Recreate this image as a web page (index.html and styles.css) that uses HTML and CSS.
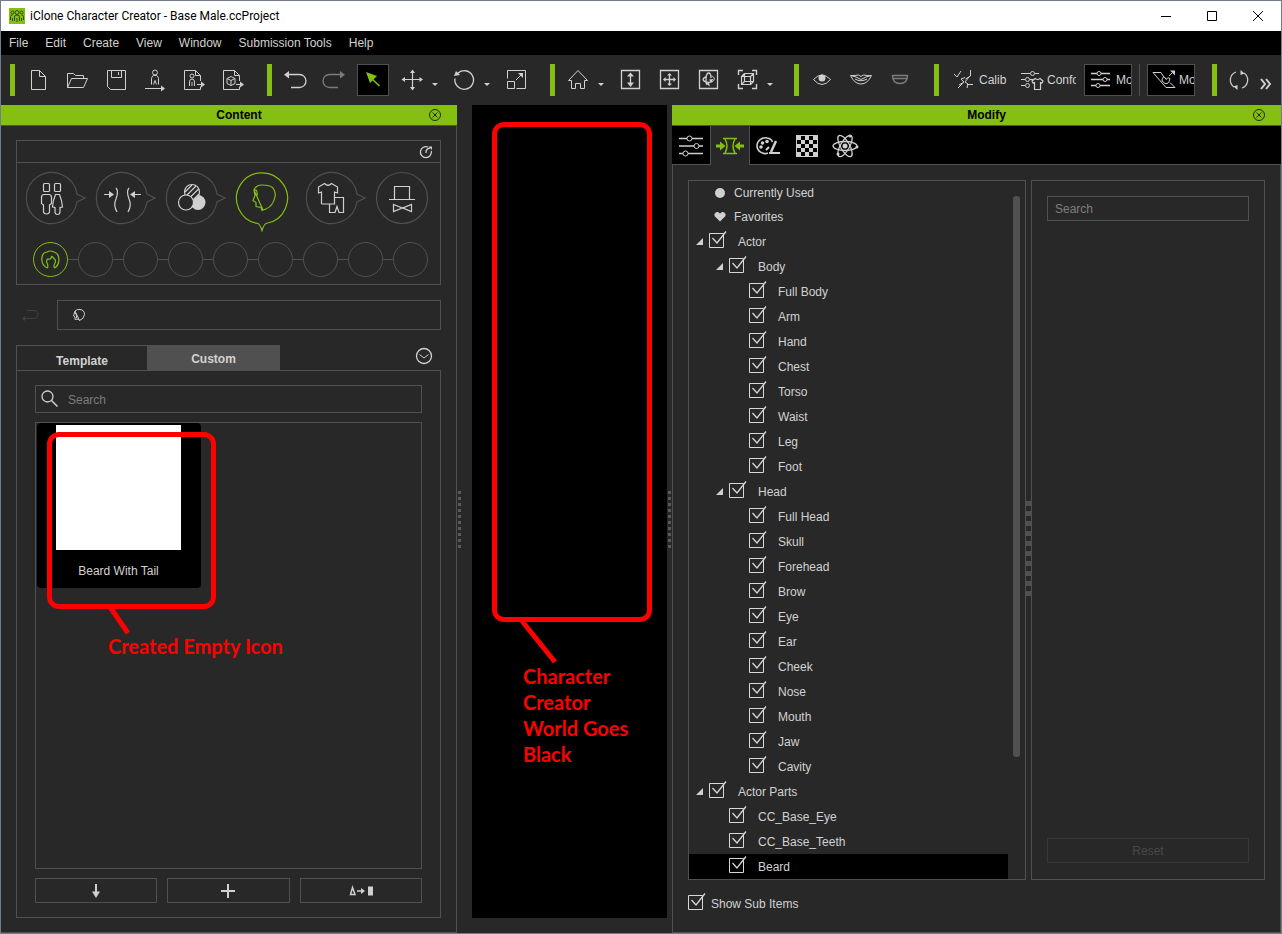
FILE: index.html
```html
<!DOCTYPE html>
<html lang="en">
<head>
    <meta charset="UTF-8">
    <meta name="viewport" content="width=device-width, initial-scale=1.0">
    <title>iClone Character Creator - Base Male.ccProject</title>
    <link rel="stylesheet" href="styles.css">
</head>
<body>
    <div class="window">
        <header class="titlebar">
            <svg class="app-icon" width="16" height="16" viewBox="0 0 16 16">
                <rect width="16" height="16" fill="#84bf12"/>
                <g fill="none" stroke="#2f4a08">
                    <circle cx="8" cy="4.5" r="2"/><circle cx="3.5" cy="4.5" r="1.5"/><circle cx="12.5" cy="4.5" r="1.5"/>
                    <path d="M5.500 13V9q0-2 2.500-2t2.500 2v4M8 10v4M1.500 12V8.500q0-1.500 2-1.500M14.500 12V8.500q0-1.500-2-1.500M3.500 10v3M12.500 10v3"/>
                </g>
            </svg>
            <span class="title">iClone Character Creator - Base Male.ccProject</span>
            <button type="button" class="win-btn" aria-label="Minimize"><svg width="12" height="12" viewBox="0 0 12 12"><path d="M1 6.500h10"/></svg></button>
            <button type="button" class="win-btn" aria-label="Maximize"><svg width="12" height="12" viewBox="0 0 12 12"><path d="M1.500 1.500h9v9h-9z"/></svg></button>
            <button type="button" class="win-btn" aria-label="Close"><svg width="12" height="12" viewBox="0 0 12 12"><path d="M1 1l10 10M11 1L1 11"/></svg></button>
        </header>

        <nav class="menubar">
            <button type="button">File</button>
            <button type="button">Edit</button>
            <button type="button">Create</button>
            <button type="button">View</button>
            <button type="button">Window</button>
            <button type="button">Submission Tools</button>
            <button type="button">Help</button>
        </nav>

        <div class="toolbar">
            <div class="group">
                <button type="button" class="tool" aria-label="New"><svg class="icon" viewBox="0 0 22 22"><path d="M4.500 1.500h8l6 6v13h-14zM12.500 1.500v6h6"/></svg></button>
                <button type="button" class="tool" aria-label="Open"><svg class="icon" viewBox="0 0 22 22"><path d="M1.500 18.500v-14h6l2 2h8v3M1.500 18.500l4-9h16l-4 9z"/></svg></button>
                <button type="button" class="tool" aria-label="Save"><svg class="icon" viewBox="0 0 22 22"><path d="M2.500 1.500h18v19h-15l-3-3zM6.500 1.500v7h10v-7M13.500 3v3"/></svg></button>
                <button type="button" class="tool" aria-label="Export avatar"><svg class="icon" viewBox="0 0 22 22"><circle cx="11" cy="3.500" r="2.500"/><path d="M7.500 15.500v-6q0-2 2-3h3q2 1 2 3v6M9.500 15.500l1.500-4 1.500 4M1 19.500h18"/><path class="solid" d="M17 16.500l4 3-4 3z"/></svg></button>
                <button type="button" class="tool" aria-label="Export avatar file"><svg class="icon" viewBox="0 0 22 22"><path d="M17.500 12V6.500l-5-5h-11v19h16v-3M12.500 1.500v5h5"/><circle cx="9" cy="7" r="2"/><path d="M6.500 17v-4q0-3 2.500-3t2.500 3v4M9 13v4M14 15.500h5"/><path class="solid" d="M18 12.500l4 3-4 3z"/></svg></button>
                <button type="button" class="tool" aria-label="Export object"><svg class="icon" viewBox="0 0 22 22"><path d="M17.500 12V6.500l-5-5h-11v19h16v-3M12.500 1.500v5h5M9 7.500l4 2v5l-4 2-4-2v-5zM5 9.500l4 2 4-2M9 11.500v5M14 15.500h5"/><path class="solid" d="M18 12.500l4 3-4 3z"/></svg></button>
            </div>
            <div class="group">
                <button type="button" class="tool" aria-label="Undo"><svg class="icon" viewBox="0 0 22 22"><path d="M3 5.500h12.500a6.500 6.500 0 0 1 0 13H7" stroke-width="1.300"/><path class="solid" d="M5 2v7.500L0 5.700z"/></svg></button>
                <button type="button" class="tool dim" aria-label="Redo"><svg class="icon" viewBox="0 0 22 22"><path d="M19 5.500H6.500a6.500 6.500 0 0 0 0 13H15" stroke-width="1.300"/><path class="solid" d="M17 2v7.500l5-3.800z"/></svg></button>
                <button type="button" class="tool" aria-label="Select"><span class="pressed"><svg class="icon green" viewBox="0 0 22 22"><path class="solid" d="M4 3l11 4-7 7z"/><path d="M9 9l8.500 8" stroke-width="1.600"/></svg></span></button>
                <button type="button" class="tool" aria-label="Move"><svg class="icon" viewBox="0 0 22 22"><path d="M11.500 2v18M2 10.500h18" stroke-width="1.200"/><path class="solid" d="M9 4L11.500.5 14 4zM9 18l2.500 3.500L14 18zM4 8L.5 10.500 4 13zM18.500 8l3.500 2.500-3.500 2.500z"/></svg></button>
                <button type="button" class="caret" aria-label="Move options"></button>
                <button type="button" class="tool" aria-label="Rotate"><svg class="icon" viewBox="0 0 22 22"><path d="M4.500 4.500a9.300 9.300 0 1 1-2.500 5" stroke-width="1.300"/><path class="solid" d="M1 7l2-5 4 4z"/></svg></button>
                <button type="button" class="caret" aria-label="Rotate options"></button>
                <button type="button" class="tool" aria-label="Scale"><svg class="icon" viewBox="0 0 22 22"><path d="M2.500 9.500v-8h18v18h-9M2.500 12.500h7v7h-7zM11 11l6-6"/><path class="solid" d="M13 4h5v5z"/></svg></button>
            </div>
            <div class="group">
                <button type="button" class="tool" aria-label="Home"><svg class="icon" viewBox="0 0 22 22"><path d="M11 1.500L1.500 11.500h3v8h4v-5h5v5h4v-8h3z"/></svg></button>
                <button type="button" class="caret" aria-label="Home options"></button>
                <button type="button" class="tool" aria-label="Zoom"><svg class="icon" viewBox="0 0 22 22"><path d="M2.500 1.500h18v18h-18zM11.500 6v9" stroke-width="1.300"/><path class="solid" d="M8 7.500L11.500 3.500 15 7.500zM8 13.500l3.500 4.500 3.500-4.500z"/></svg></button>
                <button type="button" class="tool" aria-label="Pan"><svg class="icon" viewBox="0 0 22 22"><path d="M2.500 1.500h18v18h-18zM11.500 6v9M7 10.500h9" stroke-width="1.300"/><path class="solid" d="M9 6.500l2.500-2.500L14 6.500zM9 14.500l2.500 2.500 2.500-2.500zM7.500 8L5 10.500 7.500 13zM15.500 8l2.500 2.500-2.500 2.500z"/></svg></button>
                <button type="button" class="tool" aria-label="Orbit"><svg class="icon" viewBox="0 0 22 22"><path d="M2.500 1.500h18v18h-18zM10 16c-2-3-1-12 1.500-12 2 0 2.500 3 2.500 5M15.500 12.500c-5 2-9.500 0-9.500-2.500M6 10q1-2 4-2" stroke-width="1.300"/><path d="M14.500 7c4 1 3.500 5 0 6"/><path class="solid" d="M8 14h4l1 3.500zM12 10.500l4.500-.5-2.500 3.500z"/></svg></button>
                <button type="button" class="tool" aria-label="Frame object"><svg class="icon" viewBox="0 0 22 22"><path d="M2.500 6V1.500H7M16 1.500h4.500V6M20.500 15v4.500H16M7 19.500H2.500V15" stroke-width="1.400"/><path d="M5.500 7.500h9v8h-9zM8.500 4.500h9v8h-9zM5.500 7.500l3-3M14.500 7.500l3-3M14.500 15.500l3-3M5.500 15.500l3-3" stroke-width="1.200"/></svg></button>
                <button type="button" class="caret" aria-label="Frame options"></button>
            </div>
            <div class="group">
                <button type="button" class="tool" aria-label="Eye"><svg class="icon" viewBox="0 0 22 22"><path d="M2.500 10.500q8.500-9 17 0-8.500 10-17 0z"/><circle class="solid" cx="11" cy="9" r="3.500"/></svg></button>
                <button type="button" class="tool" aria-label="Mouth"><svg class="icon" viewBox="0 0 22 22"><path d="M.5 6.500q3 .5 8-.5l2.500 1.500L13.500 6q5 1 8 .5-4 8.500-10.500 8.500T.5 6.500zM1 6.500q5 1 10 4 5-3 10-4M5 10q6 3.500 12 0"/></svg></button>
                <button type="button" class="tool dim" aria-label="Teeth"><svg class="icon" viewBox="0 0 22 22"><path d="M3.500 6.500h15q0 8-7.500 8t-7.500-8zM4 9.500h14" stroke-width="1.400"/></svg></button>
            </div>
            <div class="group last">
                <button type="button" class="text-tool"><svg class="icon" viewBox="0 0 22 22"><path d="M1 5l3 3 4-6M17.500 1v6l-5 3M12 8.500l-4 1.500 3 3-5 3M16 8l-4 5 3 2-1 4M5 19l5-5M14 15.500h6"/></svg>Calib</button>
                <button type="button" class="text-tool"><svg class="icon" viewBox="0 0 22 22"><path d="M0 4.500h9M14 4.500h4M0 10.500h4M9 10.500h3M0 16.500h4M13.500 20.500v-7l-1.500.5-1-2 3-2.500q2.500 2 5 0l3 2.500-1 2-1.500-.5v7z" stroke-width="1.200"/><circle cx="11.500" cy="4.500" r="2"/><circle cx="6.500" cy="10.500" r="2"/><circle cx="6.500" cy="16.500" r="2"/></svg>Confo</button>
                <button type="button" class="text-tool framed"><svg class="icon" viewBox="0 0 22 22"><path d="M1 4.500h6M11 4.500h9M1 10.500h12M17 10.500h3M1 16.500h5M10 16.500h10" stroke-width="1.400"/><circle cx="9" cy="4.500" r="2"/><circle cx="15" cy="10.500" r="2"/><circle cx="8" cy="16.500" r="2"/></svg>Mod</button>
                <span class="divider"></span>
                <button type="button" class="text-tool framed"><svg class="icon" viewBox="0 0 22 22"><path d="M0 3.500h8l3 5M0 3.500l13 15h9l-5-5M9 12q0-5 3-3.500l1 2q2-3 4-1l-1 3q-1 3-4 2zM16 7l3-3"/><path class="solid" d="M17 1.500h5v5z"/></svg>Mod</button>
            </div>
            <div class="group">
                <button type="button" class="tool" aria-label="Refresh"><svg class="icon" viewBox="0 0 22 22"><path d="M8 3a8.500 8.500 0 0 0-2 15M14 19a8.500 8.500 0 0 0 2-15" stroke-width="1.200"/><path class="solid" d="M12.500 1v5l4-1.500zM9.500 21v-5l-4 1.500z"/></svg></button>
                <button type="button" class="more" aria-label="More tools"><svg width="12" height="12" viewBox="0 0 12 12"><path d="M1 1l4 5-4 5M6 1l4 5-4 5"/></svg></button>
            </div>
        </div>

        <main class="workspace">
            <section class="panel content-panel">
                <h2 class="panel-title">Content
                    <button type="button" class="panel-close" aria-label="Close content"><svg width="14" height="14" viewBox="0 0 14 14"><circle cx="7" cy="7" r="5.500"/><path d="M4.500 4.500l5 5M9.500 4.500l-5 5"/></svg></button>
                </h2>
                <div class="panel-body">
                    <div class="category-box">
                        <div class="category-head">
                            <button type="button" aria-label="Reset category"><svg class="icon small" viewBox="0 0 14 14"><path d="M9 2a5.500 5.500 0 1 0 3.300 4M7 8q-.5-4 4-5" stroke-width="1.300"/><path class="solid" d="M9.500 1.500H13V5z"/></svg></button>
                        </div>
                        <div class="steps">
                            <button type="button" class="step" aria-label="Actor"><svg viewBox="0 0 52 52"><path class="ring" d="M51 22a25.500 25.500 0 1 0 0 8l8-4z"/><rect x="17.500" y="11.500" width="6" height="8" rx="1"/><rect x="28.500" y="11.500" width="6" height="8" rx="1"/><path d="M18 22.500h5q2.500 0 2.500 3v6l-2 1.500v7q-.5 2-3 2t-3-2v-7l-2-1.500v-6q0-3 2.500-3zM29.500 22.500h4q2.500 6 3 12.500l-2.500.5v5q-.5 2-2.500 2t-2.500-2v-5l-2.500-.5q.5-7 3-12.500z"/></svg></button>
                            <button type="button" class="step" aria-label="Morph"><svg viewBox="0 0 52 52"><path class="ring" d="M51 22a25.500 25.500 0 1 0 0 8l8-4z"/><path d="M20 16q3 3 0 11-3 6 1 13M33 16q-3 3 0 11 3 6-1 13M8 22.500h7M37 22.500h8"/><path class="solid" d="M13 19l5 3.500-5 3.500zM39 19l-5 3.500 5 3.500z"/></svg></button>
                            <button type="button" class="step" aria-label="Skin"><svg viewBox="0 0 52 52"><path class="ring" d="M51 22a25.500 25.500 0 1 0 0 8l8-4z"/><circle class="solid" cx="32" cy="30.500" r="7.500"/><circle class="disc" cx="26" cy="20" r="7.500"/><path d="M19 20l7-7M20 24l10-10M23 26.500l9.500-9.500M28 27l5-5"/><circle class="disc" cx="20" cy="30.500" r="7.500"/></svg></button>
                            <button type="button" class="step active" aria-label="Hair"><svg viewBox="0 0 52 52"><path class="ring" d="M30 51.500a25.500 25.500 0 1 0-8 0q2 1 4 7 2-6 4-7z"/><path d="M18 18q2-5 8-5 8 0 11 3 3 4 2 9-2 9-9 12l-4 1.500-1-3-5-1v-4l-3-2 2-5-1-5zM18 18l9 20M18 18q4-1 3 6"/></svg></button>
                            <button type="button" class="step" aria-label="Cloth"><svg viewBox="0 0 52 52"><path class="ring" d="M51 22a25.500 25.500 0 1 0 0 8l8-4z"/><path d="M15.500 32V20l-3 1v-6l6-3.500q3.500 3.500 7 0l6 3.500v6l-3-1v5M15.500 32h13v-6.500h9v15h-4.500l-2-6-2 6h-5.500V32"/></svg></button>
                            <button type="button" class="step" aria-label="Accessory"><svg viewBox="0 0 52 52"><circle class="ring" cx="26" cy="26" r="25.500"/><path d="M18.500 14.500h15v13h-15zM13 27.500h26M17.500 32.500l9 3.500 9-3.500v7L26.500 36l-9 3.500z"/></svg></button>
                        </div>
                        <div class="slots">
                            <button type="button" class="slot active" aria-label="Hair style"><svg viewBox="0 0 35 35"><path d="M14.500 26C7 23 7 11 14 10q3-2 7 0c7 2 6 13 .5 16M14.500 26q1-3-1-6 0-2 1-3 4 1 4-3M21.500 26q-1-2 0-4 2-3 0-5-2-2-3-3"/></svg></button>
                            <button type="button" class="slot" aria-label="Slot 2"></button>
                            <button type="button" class="slot" aria-label="Slot 3"></button>
                            <button type="button" class="slot" aria-label="Slot 4"></button>
                            <button type="button" class="slot" aria-label="Slot 5"></button>
                            <button type="button" class="slot" aria-label="Slot 6"></button>
                            <button type="button" class="slot" aria-label="Slot 7"></button>
                            <button type="button" class="slot" aria-label="Slot 8"></button>
                            <button type="button" class="slot" aria-label="Slot 9"></button>
                        </div>
                    </div>

                    <div class="path-row">
                        <button type="button" class="back" aria-label="Back"><svg class="icon" viewBox="0 0 22 22"><path d="M7 6.500h6q5 0 5 4t-5 4H4"/><path class="solid" d="M5 12v5l-3-2.500z"/></svg></button>
                        <div class="path">
                            <svg class="icon small" viewBox="0 0 14 14"><path d="M3 3q2-2 5-1.500Q12.500 2 12.500 6.500 12 11 7.500 12.500L6 11l-3 .5V9L1.500 8 3 3zM3 3l4.500 9.500M3 5q2 1 1.500 5"/></svg>
                        </div>
                    </div>

                    <div class="tabs">
                        <button type="button" class="tab">Template</button>
                        <button type="button" class="tab current">Custom</button>
                        <button type="button" class="expand" aria-label="Expand"><svg class="icon" viewBox="0 0 22 22"><circle cx="11" cy="11" r="7.500" stroke-width="1.300"/><path d="M6.500 9.500l4.500 3.500 4.500-3.500"/></svg></button>
                    </div>
                    <div class="tab-body">
                        <label class="search">
                            <svg class="icon" viewBox="0 0 22 22"><circle cx="8.500" cy="8.500" r="5.500" stroke-width="1.300"/><path d="M12.500 12.500l6 6" stroke-width="1.500"/></svg>
                            <input type="text" placeholder="Search" aria-label="Search content">
                        </label>
                        <div class="library">
                            <div class="card">
                                <div class="thumb"></div>
                                <p>Beard With Tail</p>
                            </div>
                            <!-- note on the empty thumbnail -->
                            <div class="note note-icon">
                                <div class="note-box"></div>
                                <svg width="30" height="30" viewBox="0 0 30 30"><path d="M5 1l18 26"/></svg>
                                <p>Created Empty Icon</p>
                            </div>
                        </div>
                        <div class="actions">
                            <button type="button" aria-label="Load"><svg class="icon" viewBox="0 0 22 22"><path d="M11 4v10" stroke-width="2"/><path class="solid" d="M7 11.500h8L11 18z"/></svg></button>
                            <button type="button" aria-label="Add"><svg class="icon" viewBox="0 0 22 22"><path d="M11 4v14M4 11h14" stroke-width="2"/></svg></button>
                            <button type="button" aria-label="Convert"><svg class="icon wide" viewBox="0 0 26 22"><path d="M4.500 7.500L7 14.500H2.500zM9 11h5" stroke-width="1.500"/><path class="solid" d="M13 8l4 3-4 3zM20 6.500h5v9h-5z"/></svg></button>
                        </div>
                    </div>
                </div>
            </section>

            <div class="splitter wide"><span class="grip"></span></div>

            <section class="viewport">
                <!-- note on the black viewport -->
                <div class="note note-world">
                    <div class="note-box"></div>
                    <svg width="45" height="48" viewBox="0 0 45 48"><path d="M5 2l33 41"/></svg>
                    <p>Character<br>Creator<br>World Goes<br>Black</p>
                </div>
            </section>

            <div class="splitter"><span class="grip"></span></div>

            <section class="panel modify-panel">
                <h2 class="panel-title">Modify
                    <button type="button" class="panel-close" aria-label="Close modify"><svg width="14" height="14" viewBox="0 0 14 14"><circle cx="7" cy="7" r="5.500"/><path d="M4.500 4.500l5 5M9.500 4.500l-5 5"/></svg></button>
                </h2>
                <div class="mod-tabs">
                    <button type="button" aria-label="Attributes"><svg class="icon mod" viewBox="0 0 28 28"><path d="M2 6.500h8M15 6.500h11M2 14h15M22 14h4M2 21.500h4M11 21.500h15" stroke-width="1.300"/><circle cx="12.500" cy="6.500" r="2.500"/><circle cx="19.500" cy="14" r="2.500"/><circle cx="8.500" cy="21.500" r="2.500"/></svg></button>
                    <button type="button" class="current" aria-label="Morph"><svg class="icon mod green" viewBox="0 0 28 28"><path d="M7 6.500h14M7 21.500h14M9 7q4 7 0 14M19 7q-4 7 0 14" stroke-width="1.500"/><path d="M0 14h5M28 14h-5" stroke-width="3"/><path class="solid" d="M4 9.500l5.500 4.500L4 18.500zM24 9.500L18.500 14l5.500 4.500z"/></svg></button>
                    <button type="button" aria-label="Material"><svg class="icon mod" viewBox="0 0 28 28"><path d="M13 21c-5 2-11-2-11-7 0-6 6-9 10-8 3 .5 5 2 5.500 4" stroke-width="1.600"/><path d="M21 9l-5 11" stroke-width="2.500"/><circle class="solid" cx="6" cy="15" r="1.800"/><circle class="solid" cx="7.500" cy="11" r="1.800"/><circle class="solid" cx="12" cy="9.500" r="1.800"/><path d="M11 18l3-3M14 21h11" stroke-width="2"/></svg></button>
                    <button type="button" aria-label="Texture"><svg class="icon mod" viewBox="0 0 28 28"><path class="solid" d="M3 3h22v22H3z"/><path fill="#000" stroke="none" d="M8 4h4v4H8zM16 4h4v4h-4zM4 8h4v4H4zM12 8h4v4h-4zM20 8h4v4h-4zM8 12h4v4H8zM16 12h4v4h-4zM4 16h4v4H4zM12 16h4v4h-4zM20 16h4v4h-4zM8 20h4v4H8zM16 20h4v4h-4z"/></svg></button>
                    <button type="button" aria-label="Physics"><svg class="icon mod" viewBox="0 0 28 28"><g stroke-width="1.300"><ellipse cx="14" cy="14" rx="12" ry="4.500"/><ellipse cx="14" cy="14" rx="12" ry="4.500" transform="rotate(60 14 14)"/><ellipse cx="14" cy="14" rx="12" ry="4.500" transform="rotate(120 14 14)"/></g><circle class="solid" cx="14" cy="14" r="2.500"/><circle class="solid" cx="26" cy="15" r="1.500"/><circle class="solid" cx="19" cy="4" r="1.500"/><circle class="solid" cx="7" cy="22" r="1.500"/></svg></button>
                </div>
                <div class="mod-body">
                    <div class="mod-columns">
                        <div class="tree">
                            <ul class="tree-list">
                                <li class="row plain"><svg class="icon mark" viewBox="0 0 12 12"><circle class="solid" cx="6" cy="6" r="5"/></svg>Currently Used</li>
                                <li class="row plain"><svg class="icon mark" viewBox="0 0 12 12"><path class="solid" d="M6 10.500L.5 5V3q1-2.500 3.500-2l2 1.500L8 1q2.500-.5 3.500 2v2z"/></svg>Favorites</li>
                                <li class="row open"><label><input type="checkbox" checked>Actor</label></li>
                                <li class="row open level-1"><label><input type="checkbox" checked>Body</label></li>
                                <li class="row level-2"><label><input type="checkbox" checked>Full Body</label></li>
                                <li class="row level-2"><label><input type="checkbox" checked>Arm</label></li>
                                <li class="row level-2"><label><input type="checkbox" checked>Hand</label></li>
                                <li class="row level-2"><label><input type="checkbox" checked>Chest</label></li>
                                <li class="row level-2"><label><input type="checkbox" checked>Torso</label></li>
                                <li class="row level-2"><label><input type="checkbox" checked>Waist</label></li>
                                <li class="row level-2"><label><input type="checkbox" checked>Leg</label></li>
                                <li class="row level-2"><label><input type="checkbox" checked>Foot</label></li>
                                <li class="row open level-1"><label><input type="checkbox" checked>Head</label></li>
                                <li class="row level-2"><label><input type="checkbox" checked>Full Head</label></li>
                                <li class="row level-2"><label><input type="checkbox" checked>Skull</label></li>
                                <li class="row level-2"><label><input type="checkbox" checked>Forehead</label></li>
                                <li class="row level-2"><label><input type="checkbox" checked>Brow</label></li>
                                <li class="row level-2"><label><input type="checkbox" checked>Eye</label></li>
                                <li class="row level-2"><label><input type="checkbox" checked>Ear</label></li>
                                <li class="row level-2"><label><input type="checkbox" checked>Cheek</label></li>
                                <li class="row level-2"><label><input type="checkbox" checked>Nose</label></li>
                                <li class="row level-2"><label><input type="checkbox" checked>Mouth</label></li>
                                <li class="row level-2"><label><input type="checkbox" checked>Jaw</label></li>
                                <li class="row level-2"><label><input type="checkbox" checked>Cavity</label></li>
                                <li class="row open"><label><input type="checkbox" checked>Actor Parts</label></li>
                                <li class="row level-1"><label><input type="checkbox" checked>CC_Base_Eye</label></li>
                                <li class="row level-1"><label><input type="checkbox" checked>CC_Base_Teeth</label></li>
                                <li class="row level-1 selected"><label><input type="checkbox" checked>Beard</label></li>
                            </ul>
                            <div class="scrollbar"><div class="scroll-thumb"></div></div>
                        </div>
                        <div class="splitter"><span class="grip large"></span></div>
                        <div class="side">
                            <input type="text" placeholder="Search" aria-label="Search morphs">
                            <button type="button" disabled>Reset</button>
                        </div>
                    </div>
                    <label class="sub-items"><input type="checkbox" checked>Show Sub Items</label>
                </div>
            </section>
        </main>
    </div>
</body>
</html>
```
FILE: styles.css
```css
* {
    box-sizing: border-box;
}

body {
    margin: 0;
    font-family: "Liberation Sans", Arial, sans-serif;
    font-size: 12px;
    color: #d2d2d2;
    background-color: #282828;
}

button {
    display: flex;
    align-items: center;
    justify-content: center;
    padding: 0;
    border: none;
    background: none;
    color: inherit;
    font: inherit;
    flex-shrink: 0;
}

input {
    font: inherit;
    color: inherit;
}

input::placeholder {
    color: #7d7d7d;
    opacity: 1;
}

p,
h2,
ul {
    margin: 0;
    padding: 0;
}

svg {
    display: block;
    flex-shrink: 0;
    fill: none;
    stroke: #d0d0d0;
}

.icon {
    width: 22px;
    height: 22px;
    overflow: visible;
}

.icon .solid,
.step .solid {
    fill: #d0d0d0;
    stroke: none;
}

.icon.small {
    width: 14px;
    height: 14px;
}

.icon.wide {
    width: 26px;
}

.icon.green {
    stroke: #84bf12;
}

.icon.green .solid {
    fill: #84bf12;
}

.window {
    min-height: 100vh;
    display: flex;
    flex-direction: column;
    border: 1px solid #717c8e;
}

/* Title bar and menu */
.titlebar {
    display: flex;
    align-items: center;
    height: 30px;
    padding-left: 8px;
    background-color: #fff;
    color: #000;
    font-family: Roboto, "Segoe UI", sans-serif;
}

.app-icon {
    stroke: none;
}

.title {
    flex: 1;
    margin-left: 5px;
}

.win-btn {
    width: 46px;
    height: 30px;
}

.win-btn svg {
    stroke: #000;
}

.menubar {
    display: flex;
    gap: 1px;
    height: 24px;
    background-color: #000;
}

.menubar button {
    padding: 0 8px;
}

/* Toolbar */
.toolbar {
    display: flex;
    align-items: center;
    height: 50px;
    padding-left: 9px;
}

.group {
    display: flex;
    align-items: center;
    height: 32px;
    margin-right: 14px;
    padding-left: 4px;
    border-left: 5px solid #84bf12;
}

.group.last {
    margin-right: 17px;
    padding-left: 7px;
}

.group:last-child {
    margin-right: 0;
    padding-left: 3px;
}

.tool {
    width: 39px;
    height: 32px;
    padding-right: 1px;
}

.pressed {
    display: flex;
    align-items: center;
    justify-content: center;
    width: 32px;
    height: 32px;
    border: 1px solid #505050;
    background-color: #000;
}

.dim {
    opacity: 0.5;
}

.caret {
    width: 13px;
    height: 32px;
    justify-content: flex-start;
}

.caret::before {
    content: "";
    margin-top: 9px;
    border: 3px solid transparent;
    border-top-color: #d0d0d0;
    border-bottom: none;
}

.text-tool {
    width: 62px;
    height: 32px;
    padding-left: 7px;
    gap: 4px;
    justify-content: flex-start;
    overflow: hidden;
    white-space: nowrap;
}

.text-tool + .text-tool {
    margin-left: 6px;
}

.text-tool.framed {
    width: 48px;
    padding-left: 5px;
    border: 1px solid #505050;
    background-color: #000;
}

.text-tool + .framed {
    margin-left: 8px;
}

.divider {
    height: 32px;
    margin: 0 7px;
    border-left: 1px solid #505050;
}

.more {
    margin: 8px 0 0 1px;
}

.more svg {
    stroke-width: 2;
}

/* Panels */
.workspace {
    flex: 1;
    display: flex;
}

.panel {
    display: flex;
    flex-direction: column;
}

.content-panel {
    flex: 0 0 456px;
}

.modify-panel {
    flex: 0 0 609px;
}

.panel-title {
    display: flex;
    align-items: center;
    justify-content: center;
    height: 20px;
    padding-left: 49px;
    background-color: #84bf12;
    color: #000;
    font-size: 12px;
}

.panel-close {
    width: 14px;
    margin: 0 15px 0 auto;
}

/* keeps the title centred beside the close button */
.panel-title::before {
    content: "";
    margin-right: auto;
}

.panel-close svg {
    stroke: #1c2a04;
}

.panel-body {
    flex: 1;
    display: flex;
    flex-direction: column;
    padding: 14px 15px;
    border: 1px solid #505050;
    border-left: none;
}

.category-box {
    border: 1px solid #505050;
}

.category-head {
    display: flex;
    justify-content: flex-end;
    height: 22px;
    padding-right: 7px;
    border-bottom: 1px solid #505050;
}

.steps {
    display: flex;
    justify-content: space-between;
    padding: 9px 12px 0 9px;
}

.step svg {
    width: 52px;
    height: 52px;
    overflow: visible;
    stroke-width: 1.2;
}

.step .ring {
    stroke: #505050;
}

.step .disc {
    fill: #282828;
}

.step.active svg,
.step.active .ring,
.slot.active svg {
    stroke: #84bf12;
}

.slots {
    display: flex;
    justify-content: space-between;
    margin: 18px 12px 7px 16px;
    background: linear-gradient(#505050, #505050) center / 100% 1px no-repeat;
}

.slot {
    width: 35px;
    height: 35px;
    border: 1px solid #505050;
    border-radius: 50%;
    background-color: #282828;
}

.slot.active {
    border-color: #84bf12;
}

.slot svg {
    width: 35px;
    height: 35px;
    stroke-width: 1.2;
}

.path-row {
    display: flex;
    height: 30px;
    margin: 15px 0;
}

.back {
    width: 41px;
    padding-right: 12px;
    opacity: 0.15;
}

.path {
    flex: 1;
    display: flex;
    align-items: center;
    padding-left: 14px;
    border: 1px solid #505050;
}

.tabs {
    display: flex;
    height: 25px;
}

.tab {
    width: 131px;
    padding-top: 5px;
    border: 1px solid #505050;
    border-width: 1px 0 0 1px;
    font-weight: bold;
}

.tab.current {
    width: 133px;
    padding-top: 2px;
    border: none;
    background-color: #505050;
}

.expand {
    height: 22px;
    margin: 0 6px 0 auto;
}

.tab-body {
    flex: 1;
    display: flex;
    flex-direction: column;
    padding: 14px 18px;
    border: 1px solid #505050;
}

.search {
    display: flex;
    align-items: center;
    height: 28px;
    padding-left: 3px;
    border: 1px solid #505050;
}

.search input {
    flex: 1;
    margin-left: 7px;
    padding: 1px 0 0;
    border: none;
    background: none;
}

.library {
    position: relative;
    flex: 1;
    margin: 9px 0;
    padding-left: 1px;
    border: 1px solid #505050;
}

.card {
    width: 164px;
    height: 165px;
    padding: 2px 20px 0 19px;
    border-radius: 4px;
    background-color: #000;
    text-align: center;
}

.thumb {
    height: 125px;
    background-color: #fff;
}

.card p {
    margin-top: 14px;
}

.actions {
    display: flex;
    gap: 10px;
}

.actions button {
    flex: 1;
    height: 25px;
    border: 1px solid #505050;
}

/* Splitters */
.splitter {
    display: flex;
    align-items: center;
    width: 5px;
    padding-left: 1px;
}

.splitter.wide {
    width: 15px;
}

.grip {
    width: 3px;
    height: 57px;
    background: repeating-linear-gradient(#5a5a5a 0 3px, transparent 3px 6px);
}

.grip.large {
    width: 5px;
    height: 95px;
    flex-shrink: 0;
    background: repeating-linear-gradient(#505050 0 5px, transparent 5px 10px);
}

.mod-columns .splitter {
    padding: 36px 0 0;
}

.viewport {
    position: relative;
    flex: 1;
    margin-bottom: 15px;
    background-color: #000;
}

/* Red notes over the panels */
.note {
    position: absolute;
    color: #f00;
    font-family: Lato, Calibri, sans-serif;
    font-size: 20px;
    font-weight: bold;
    line-height: 26px;
    white-space: nowrap;
}

.note-box {
    border: 5px solid #f00;
    border-radius: 12px;
}

.note svg {
    stroke: #f00;
    stroke-width: 5;
}

.note-icon {
    left: 11px;
    top: 9px;
}

.note-icon .note-box {
    width: 169px;
    height: 177px;
}

.note-icon svg {
    margin: -3px 0 -3px 58px;
}

.note-icon p {
    margin-left: 61px;
}

.note-world {
    left: 20px;
    top: 17px;
}

.note-world .note-box {
    width: 160px;
    height: 500px;
}

.note-world svg {
    margin: -3px 0 -4px 25px;
}

.note-world p {
    margin-left: 31px;
}

/* Modify panel */
.mod-tabs {
    display: flex;
    height: 40px;
    border-top: 1px solid #505050;
    background: linear-gradient(#505050, #505050) bottom / 100% 1px no-repeat #000;
}

.mod-tabs button {
    width: 38px;
    height: 39px;
}

.mod-tabs .current {
    width: 40px;
    border: 1px solid #505050;
    border-width: 0 1px;
    background-color: #282828;
}

.icon.mod {
    width: 28px;
    height: 28px;
}

.mod-body {
    flex: 1;
    padding: 15px 15px 0;
    border: 1px solid #505050;
    border-top: none;
}

.mod-columns {
    display: flex;
}

.tree {
    flex: 1;
    display: flex;
    border: 1px solid #505050;
}

.tree-list {
    flex: 1;
    list-style: none;
}

.row {
    display: flex;
    align-items: center;
    height: 25px;
    padding-left: 20px;
}

.row.plain {
    height: 24px;
    padding-left: 25px;
    gap: 8px;
}

.row.open::before {
    content: "";
    width: 7px;
    height: 7px;
    margin: 0 6px 0 -13px;
    background-color: #d0d0d0;
    clip-path: polygon(100% 0, 100% 100%, 0 100%);
}

.level-1 {
    padding-left: 40px;
}

.level-2 {
    padding-left: 60px;
}

.row.selected {
    background-color: #000;
}

.row label,
.sub-items {
    display: flex;
    align-items: center;
    gap: 11px;
}

.icon.mark {
    width: 12px;
    height: 12px;
}

input[type="checkbox"] {
    appearance: none;
    width: 18px;
    height: 18px;
    margin: 0 0 3px;
    background: url("data:image/svg+xml,%3Csvg xmlns='http://www.w3.org/2000/svg' width='18' height='18' fill='none' stroke='%23d8d8d8'%3E%3Cpath d='M.5 2.500h14v14H.5z'/%3E%3C/svg%3E") no-repeat;
}

input[type="checkbox"]:checked {
    background-image: url("data:image/svg+xml,%3Csvg xmlns='http://www.w3.org/2000/svg' width='18' height='18' fill='none' stroke='%23d8d8d8'%3E%3Cpath d='M.5 2.500h14v14H.5z'/%3E%3Cpath d='M3.500 7l4.500 5 9-11.500' stroke-width='1.300'/%3E%3C/svg%3E");
}

.scrollbar {
    width: 17px;
    padding: 15px 5px 0;
}

.scroll-thumb {
    width: 7px;
    height: 561px;
    border-radius: 3px;
    background-color: #505050;
}

.side {
    width: 234px;
    display: flex;
    flex-direction: column;
    justify-content: space-between;
    padding: 15px 15px 16px;
    border: 1px solid #505050;
}

.side input {
    height: 25px;
    padding: 0 7px;
    border: 1px solid #505050;
    background: none;
}

.side button {
    height: 25px;
    border: 1px solid #383838;
    color: #484848;
}

.sub-items {
    gap: 5px;
    margin-top: 13px;
}
```
